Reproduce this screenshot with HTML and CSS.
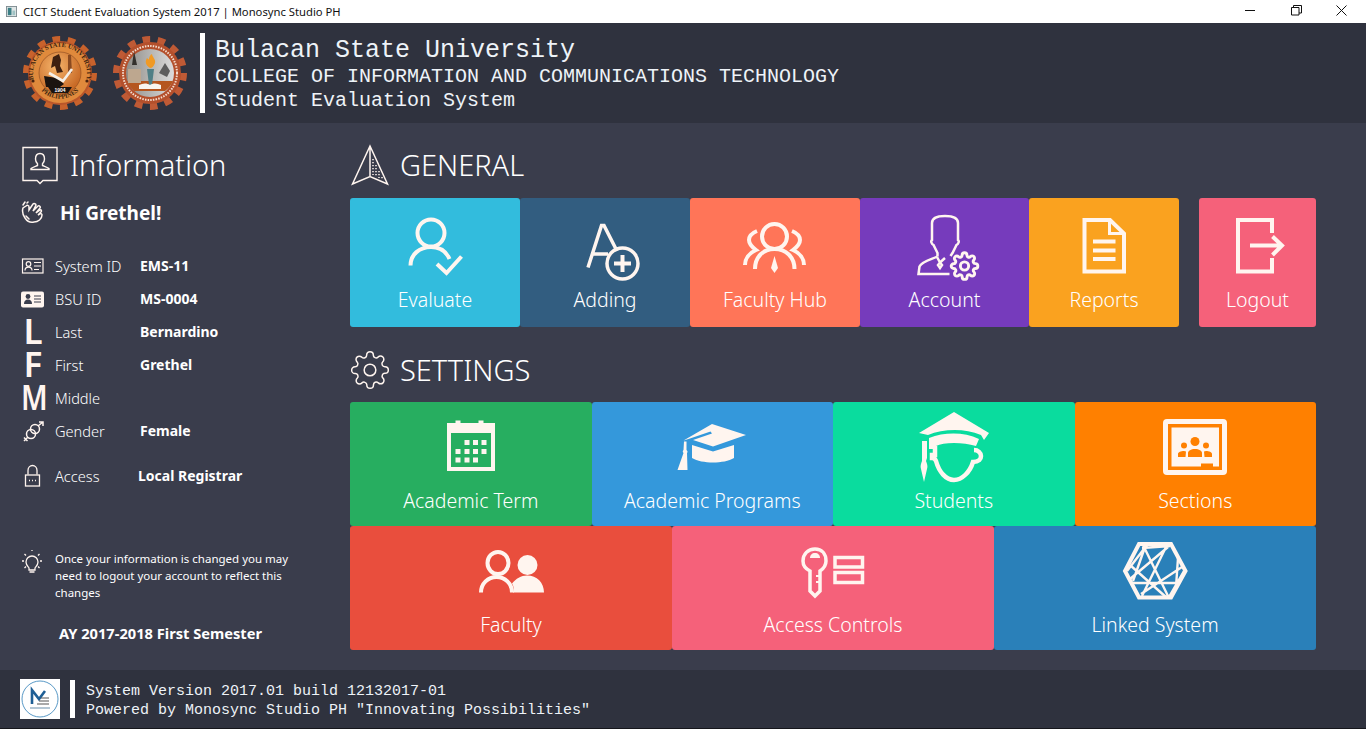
FILE: index.html
```html
<!DOCTYPE html>
<html lang="en">
<head>
    <meta charset="UTF-8">
    <title>CICT Student Evaluation System 2017 | Monosync Studio PH</title>
    <link rel="stylesheet" href="styles.css">
</head>
<body>
    <svg class="defs" width="0" height="0">
        <defs>
            <path id="gear" d="M19.4 15a1.65 1.65 0 0 0 .33 1.82l.06.06a2 2 0 0 1 0 2.83 2 2 0 0 1-2.83 0l-.06-.06a1.65 1.65 0 0 0-1.82-.33 1.65 1.65 0 0 0-1 1.51V21a2 2 0 0 1-2 2 2 2 0 0 1-2-2v-.09A1.65 1.65 0 0 0 9 19.4a1.65 1.65 0 0 0-1.82.33l-.06.06a2 2 0 0 1-2.83 0 2 2 0 0 1 0-2.83l.06-.06a1.65 1.65 0 0 0 .33-1.82 1.65 1.65 0 0 0-1.51-1H3a2 2 0 0 1-2-2 2 2 0 0 1 2-2h.09A1.65 1.65 0 0 0 4.6 9a1.65 1.65 0 0 0-.33-1.82l-.06-.06a2 2 0 0 1 0-2.83 2 2 0 0 1 2.83 0l.06.06a1.65 1.65 0 0 0 1.82.33H9a1.65 1.65 0 0 0 1-1.51V3a2 2 0 0 1 2-2 2 2 0 0 1 2 2v.09a1.65 1.65 0 0 0 1 1.51 1.65 1.65 0 0 0 1.82-.33l.06-.06a2 2 0 0 1 2.83 0 2 2 0 0 1 0 2.83l-.06.06a1.65 1.65 0 0 0-.33 1.82V9a1.65 1.65 0 0 0 1.51 1H21a2 2 0 0 1 2 2 2 2 0 0 1-2 2h-.09a1.65 1.65 0 0 0-1.51 1z"/>
            <radialGradient id="seal-a" cx="40%" cy="35%" r="70%">
                <stop offset="0" stop-color="#f6b56c"/>
                <stop offset="1" stop-color="#c4631f"/>
            </radialGradient>
            <linearGradient id="seal-b" x1="0" y1="0" x2="1" y2="0">
                <stop offset="0" stop-color="#8f8d88"/>
                <stop offset="1" stop-color="#dcdcdc"/>
            </linearGradient>
            <path id="seal-top" d="M12 46a27 27 0 1 1 52 0"/>
            <path id="seal-bottom" d="M17 53a26 26 0 0 0 42 0"/>
        </defs>
    </svg>

    <!-- window title bar -->
    <div class="titlebar">
        <svg class="app-icon" viewBox="0 0 12 12">
            <rect x="0.5" y="0.5" width="11" height="11" fill="#dfe6e6" stroke="#7d8b90"/>
            <rect x="2" y="2" width="4" height="8" fill="#3c7f86"/>
            <rect x="7" y="5" width="3" height="5" fill="#9fc2c4"/>
        </svg>
        <span class="title-text">CICT Student Evaluation System 2017 | Monosync Studio PH</span>
        <div class="window-buttons">
            <svg width="11" height="11" viewBox="0 0 11 11"><path d="M0 5.500h10" stroke="#111" fill="none"/></svg>
            <svg width="11" height="11" viewBox="0 0 11 11"><path d="M.5 2.500h7.500v7.500H.5zM2.500 2.500V.5h8v7.500H8" stroke="#111" fill="none"/></svg>
            <svg width="11" height="11" viewBox="0 0 11 11"><path d="M.5 .5l10 10M10.500 .5l-10 10" stroke="#111" fill="none"/></svg>
        </div>
    </div>

    <!-- university banner -->
    <header class="banner">
        <svg class="seal" viewBox="0 0 76 76">
            <circle cx="38" cy="38" r="33" fill="none" stroke="#c8622c" stroke-width="8" stroke-dasharray="7.4 7.4"/>
            <circle cx="38" cy="38" r="32" fill="#b9562a"/>
            <circle cx="38" cy="38" r="30" fill="#e08a3c"/>
            <circle cx="38" cy="38" r="21" fill="url(#seal-a)" stroke="#8a4a20" stroke-width="0.600"/>
            <text class="seal-text"><textPath href="#seal-top" startOffset="50%" text-anchor="middle">BULACAN STATE UNIVERSITY</textPath></text>
            <text class="seal-text"><textPath href="#seal-bottom" startOffset="50%" text-anchor="middle">PHILIPPINES</textPath></text>
            <circle cx="11" cy="46" r="1.600" fill="#4a2410"/>
            <circle cx="65" cy="46" r="1.600" fill="#4a2410"/>
            <path d="M31 22l6-3 2 6-1 6 3 6-6 1-2-7-4 2z" fill="#3e2010"/>
            <path d="M46 20h3l1 18h-4z" fill="#8a4a20"/>
            <path d="M22 41l13 2 7 6-4 3H24z" fill="#1b1410"/>
            <path d="M26 52h24l-4 6H30z" fill="#1b1410"/>
            <path d="M27 38l14 8 9-12" fill="none" stroke="#f5f0e8" stroke-width="2.600"/>
            <text class="seal-year" x="38" y="57" text-anchor="middle">1904</text>
        </svg>
        <svg class="seal seal-second" viewBox="0 0 76 76">
            <circle cx="38" cy="38" r="33" fill="none" stroke="#bf5a35" stroke-width="8" stroke-dasharray="7.4 7.4"/>
            <circle cx="38" cy="38" r="31" fill="#b4502c"/>
            <circle cx="38" cy="38" r="27" fill="none" stroke="#f4ddcf" stroke-width="2" stroke-dasharray="1.5 1.2"/>
            <circle cx="38" cy="38" r="24" fill="url(#seal-b)"/>
            <path d="M15 46h46a24 24 0 0 1-8 10H22a24 24 0 0 1-7-10z" fill="#b5561f"/>
            <path d="M16 34h13v14H16z" fill="#bda78f"/>
            <path d="M22 16l3 14h-5z" fill="#33302c"/>
            <path d="M35 34h7l-2 16h-3z" fill="#4f7f86"/>
            <path d="M38 33c-5-3-5-7-3-10 1 1 2 2 2 1 0-2 2-5 3-5 0 3 4 5 3 9-1 3-3 5-5 5z" fill="#f09a25"/>
            <path d="M27 50c4-2 8-2 11 0 3-2 7-2 11 0v4H27z" fill="#f8f6f0"/>
            <path d="M47 38l6-10 5 8-3 6z" fill="#5d5d5d"/>
        </svg>
        <div class="banner-bar"></div>
        <div class="banner-text">
            <div class="banner-uni">Bulacan State University</div>
            <div class="banner-line">COLLEGE OF INFORMATION AND COMMUNICATIONS TECHNOLOGY</div>
            <div class="banner-line">Student Evaluation System</div>
        </div>
    </header>

    <div class="main">
        <!-- left information column -->
        <aside class="sidebar">
            <div class="heading">
                <svg class="heading-icon" width="38" height="42" viewBox="21 145 38 42" fill="none" stroke="#fff5ef" stroke-width="1.400">
                    <path d="M23 148.500h34v33H43l-3 3-3-3H23z"/>
                    <path d="M40 154.500c-3.300 0-4.500 2.700-4.500 5.500 0 2 1 3.800 2 4.800v1.700c-2.500 1-5 1.800-6.500 3v1h18v-1c-1.500-1.200-4-2-6.500-3v-1.700c1-1 2-2.800 2-4.800 0-2.800-1.200-5.500-4.500-5.500z"/>
                </svg>
                <span class="heading-text">Information</span>
            </div>
            <div class="greeting">
                <svg width="24" height="24" viewBox="24 202 24 24" fill="none" stroke="#fff5ef" stroke-width="1.500" stroke-linecap="round">
                    <path d="M26 209c-1 3 0 7 2 10 2 3 5 5 9 4 4 0 8-3 8-7 0-1-1-2-2-1l-2 1 3-3c1-1 0-3-1-2l-4 3 4-5c1-1-1-3-2-2l-5 5 3-6c0-1-2-2-3-1l-4 6 0-3c0-2-2-2-3-1z"/>
                    <path d="M26 206l2-3M30 204l1-1"/>
                    <path d="M32 220l-3-3"/>
                </svg>
                <span>Hi Grethel!</span>
            </div>

            <div class="info-list">
                <div class="info-row">
                    <svg class="info-icon" viewBox="21 257 24 17" fill="none" stroke="#fff5ef" stroke-width="1.200">
                        <rect x="22.500" y="258.500" width="20.500" height="14"/>
                        <circle cx="28.500" cy="263.500" r="2.300"/>
                        <path d="M25 270c0-2 1.500-3.300 3.500-3.300s3.500 1.300 3.500 3.300M34 262h7M34 265.500h7M34 269h5"/>
                    </svg>
                    <span class="info-label">System ID</span>
                    <span class="info-value">EMS-11</span>
                </div>
                <div class="info-row">
                    <svg class="info-icon" viewBox="21 290 24 17">
                        <rect x="21" y="291" width="23" height="16" rx="2" fill="#fff5ef"/>
                        <circle cx="28" cy="296" r="2.400" fill="#3a3d4c"/>
                        <path d="M24 303.500c0-3 1.500-4.500 4-4.500s4 1.500 4 4.500z" fill="#3a3d4c"/>
                        <path d="M34 295.500h7M34 298.500h7M34 301.500h7" stroke="#3a3d4c" stroke-width="1.200"/>
                    </svg>
                    <span class="info-label">BSU ID</span>
                    <span class="info-value">MS-0004</span>
                </div>
                <div class="info-row">
                    <span class="info-letter">L</span>
                    <span class="info-label">Last</span>
                    <span class="info-value">Bernardino</span>
                </div>
                <div class="info-row">
                    <span class="info-letter">F</span>
                    <span class="info-label">First</span>
                    <span class="info-value">Grethel</span>
                </div>
                <div class="info-row">
                    <span class="info-letter info-letter-m">M</span>
                    <span class="info-label">Middle</span>
                    <span class="info-value"></span>
                </div>
                <div class="info-row">
                    <svg class="info-icon" viewBox="21 419 24 22" fill="none" stroke="#fff5ef" stroke-width="1.500">
                        <circle cx="31" cy="433" r="4.500"/>
                        <circle cx="35" cy="428" r="4.500"/>
                        <path d="M38 425l5-4M39 421h4v4M28 436l-4 4M24 436.500l3.500 3.500"/>
                    </svg>
                    <span class="info-label">Gender</span>
                    <span class="info-value">Female</span>
                </div>
                <div class="info-row info-row-access">
                    <svg class="info-icon" viewBox="21 464 24 23" fill="none" stroke="#fff5ef" stroke-width="1.300">
                        <rect x="25.500" y="474.500" width="14" height="11"/>
                        <path d="M28 474v-4c0-3 2-5 4.500-5s4.500 2 4.500 5v4M29 480h1M32 480h1M35 480h1"/>
                    </svg>
                    <span class="info-label">Access</span>
                    <span class="info-value">Local Registrar</span>
                </div>
            </div>

            <div class="note">
                <svg class="note-icon" width="24" height="24" viewBox="21 551 24 24" fill="none" stroke="#fff5ef" stroke-width="1.300">
                    <path d="M29 571v-2c-1-1.500-3-3-3-6a6 6 0 0 1 12 0c0 3-2 4.500-3 6v2z"/>
                    <path d="M29.500 573h5M22 562h2M40 562h2M24.500 555l1.500 1.500M39.500 555l-1.500 1.500M24.500 569l1.500-1.500M39.500 569l-1.500-1.500M32 551v1"/>
                </svg>
                <p>Once your information is changed you may need to logout your account to reflect this changes</p>
            </div>
            <div class="semester">AY 2017-2018 First Semester</div>
        </aside>

        <!-- tiles -->
        <main class="content">
            <div class="heading">
                <svg class="heading-icon" width="40" height="42" viewBox="350 145 40 42" fill="none" stroke="#fff5ef" stroke-width="1.500">
                    <path d="M370 147l17.500 38-17.500-7.500L352.500 185zM370 147v30.500"/>
                    <path d="M373 160v16M376 166v12M379 172v7M382 178v3" stroke-dasharray="1.200 1.800"/>
                </svg>
                <span class="heading-text">GENERAL</span>
            </div>
            <div class="tile-row">
                <a class="tile tile-w170 c-evaluate">
                    <svg class="tile-icon" viewBox="395 212 80 70" fill="none" stroke="#fff5ef" stroke-width="4">
                        <circle cx="431" cy="233" r="13.500"/>
                        <path d="M410.500 265.500c0-11 9-18.500 20.500-18.500 8.500 0 15 4 18.500 12"/>
                        <path d="M437 264l9.500 9 15-16.500"/>
                    </svg>
                    <span class="tile-label">Evaluate</span>
                </a>
                <a class="tile tile-w170 c-adding">
                    <svg class="tile-icon" viewBox="565 212 80 70" fill="none" stroke="#fff5ef" stroke-width="3.500">
                        <path d="M588 267.500L601.500 225.500h2.500L617 251M593 254h15"/>
                        <circle cx="622.500" cy="263.500" r="15.500"/>
                        <path d="M622.500 255v17M614 263.500h17" stroke-width="4"/>
                    </svg>
                    <span class="tile-label">Adding</span>
                </a>
                <a class="tile tile-w170 c-hub">
                    <svg class="tile-icon" viewBox="735 212 80 70" fill="none" stroke="#fff5ef" stroke-width="4">
                        <circle cx="774.500" cy="236.500" r="12.500"/>
                        <path d="M755 269c0-12 8-20 19.500-20s20 8 20 20"/>
                        <path d="M757 231c-5 2-8 5-8 9 0 4 3 7 7 10-7 3-11 9-11 15M792 231c5 2 8 5 8 9 0 4-3 7-7 10 7 3 11 9 11 15"/>
                        <path d="M774.500 256l3.500 12-3.500 5-3.500-5z" fill="#fff5ef" stroke="none"/>
                    </svg>
                    <span class="tile-label">Faculty Hub</span>
                </a>
                <a class="tile tile-w169 c-account">
                    <svg class="tile-icon" viewBox="905 212 80 70" fill="none" stroke="#fff5ef" stroke-width="2.500">
                        <path d="M937.500 256.500V253l-4-8c-2-1-3-4-1.500-5v-17c0-5 6-7 13-7s13 2 13 7v17c1.500 1 .5 4-1.500 5l-4 8-2 3"/>
                        <path d="M937.500 256.500c-6 3-15 4.500-18 10l-1 7.500h31"/>
                        <path d="M937 257l3 5.500 5-4.500M940 262.500l-2 2.500 2 3 2-3z"/>
                        <g transform="translate(950 251.500) scale(1.210)" stroke-width="2.400" stroke-linejoin="round"><use href="#gear"/><circle cx="12" cy="12" r="3.400"/></g>
                    </svg>
                    <span class="tile-label">Account</span>
                </a>
                <a class="tile tile-w150 c-reports">
                    <svg class="tile-icon" viewBox="1064 212 80 70" fill="none" stroke="#fff5ef" stroke-width="4">
                        <path d="M1084.500 220h25.500l14 13.500v38h-39.500z"/>
                        <path d="M1109.500 221v12.500h13" stroke-width="3"/>
                        <path d="M1093 241.500h22.500M1093 250.500h22.500M1093 259h22.500"/>
                    </svg>
                    <span class="tile-label">Reports</span>
                </a>
                <a class="tile tile-w117 tile-gap c-logout">
                    <svg class="tile-icon" viewBox="1217 212 80 70" fill="none" stroke="#fff5ef" stroke-width="4">
                        <path d="M1271 233v-13h-34v51.500h34V258"/>
                        <path d="M1249 245.500h32M1271.500 236.500l9.500 9-9.500 9.500"/>
                    </svg>
                    <span class="tile-label">Logout</span>
                </a>
            </div>

            <div class="heading heading-settings">
                <svg class="heading-icon" width="40" height="42" viewBox="0 0 24 24" fill="none" stroke="#fff5ef" stroke-width="0.900">
                    <use href="#gear"/>
                    <circle cx="12" cy="12" r="3.500"/>
                </svg>
                <span class="heading-text">SETTINGS</span>
            </div>
            <div class="tile-row">
                <a class="tile tile-grow tile-settings c-term">
                    <svg class="tile-icon" viewBox="431 415 80 70" fill="#fff5ef">
                        <path d="M447 423h8.500v-2.500h5v2.500h18v-2.500h5v2.500h11.500v48h-48zM451 433v34h40v-34z"/>
                        <rect x="464.500" y="440" width="5" height="5"/><rect x="473" y="440" width="5" height="5"/><rect x="481.500" y="440" width="5" height="5"/>
                        <rect x="455.500" y="449" width="5" height="5"/><rect x="464.500" y="449" width="5" height="5"/><rect x="473" y="449" width="5" height="5"/><rect x="481.500" y="449" width="5" height="5"/>
                        <rect x="455.500" y="457.500" width="5" height="5"/><rect x="464.500" y="457.500" width="5" height="5"/><rect x="473" y="457.500" width="5" height="5"/>
                    </svg>
                    <span class="tile-label">Academic Term</span>
                </a>
                <a class="tile tile-grow tile-settings c-programs">
                    <svg class="tile-icon" viewBox="673 415 80 70" fill="#fff5ef">
                        <path d="M713 424l34 11-33 11.500-20-6.500 19-6.500-1.500-2-22 7.500-5 1.500z"/>
                        <path d="M693 445l21 6.500 21-6.500v13c-5 3-13 4.500-21 4.500s-16-1.500-21-4.500z"/>
                        <path d="M685 441.500h2.500v8.500c1 1 1.500 2 .5 3l.5 17h-10l6-17c-1-1-1-2 0-3z"/>
                    </svg>
                    <span class="tile-label">Academic Programs</span>
                </a>
                <a class="tile tile-grow tile-settings c-students">
                    <svg class="tile-icon" viewBox="915 415 80 70" fill="#fff5ef">
                        <path d="M955 412l35 21-5 7-3-5c-17-7-38-6-53 0l-9-2z"/>
                        <path d="M930 438c16-6 35-6 50 1l-3 7c-7-2-14-3-22-3s-14 1-18 3l-1 3h-6z"/>
                        <path d="M936 446v9h-3v3c3 0 3 1 4 3 3 11 10 19 18 19s16-8 19-18c6 0 8-3 8-6s-3-6-7-6" fill="none" stroke="#fff5ef" stroke-width="4.500"/>
                        <path d="M923 441h5v17l-1 3c1 3 2 5 1 8l-3 13-3-13c-1-3 0-5 1-8z"/>
                    </svg>
                    <span class="tile-label">Students</span>
                </a>
                <a class="tile tile-grow tile-settings c-sections">
                    <svg class="tile-icon" viewBox="1156 415 80 70" fill="#fff5ef">
                        <rect x="1164" y="419" width="64" height="56" rx="4"/>
                        <rect x="1169" y="424" width="54" height="46" fill="#ff8000"/>
                        <rect x="1172.500" y="427.500" width="47.500" height="39"/>
                        <g fill="#ff8000">
                            <circle cx="1196" cy="441.500" r="4.500"/>
                            <circle cx="1185" cy="445.500" r="3"/>
                            <circle cx="1207" cy="445.500" r="3"/>
                            <path d="M1189 457v-4c0-2 3-4 7-4s7 2 7 4v4z"/>
                            <path d="M1179 457v-3c0-2 3-3 6-3l2 .5-.5 5.500zM1213 457v-3c0-2-3-3-6-3l-2 .5.500 5.500z"/>
                            <rect x="1202" y="463.500" width="12" height="3.500"/>
                        </g>
                    </svg>
                    <span class="tile-label">Sections</span>
                </a>
            </div>
            <div class="tile-row">
                <a class="tile tile-grow tile-settings c-faculty">
                    <svg class="tile-icon" viewBox="471 539 80 70" fill="none" stroke="#fff5ef" stroke-width="4">
                        <ellipse cx="498" cy="563" rx="10.500" ry="11"/>
                        <path d="M481 592.500c0-9 7-15.500 15.500-15.500s15.500 6.500 15.500 15.500"/>
                        <ellipse cx="527.500" cy="565" rx="10" ry="10" fill="#fff5ef" stroke="none"/>
                        <path d="M513 592.500c1-3 1-6-1-9 4-5 9-8 15-8 10 0 17 7 17 17z" fill="#fff5ef" stroke="none"/>
                    </svg>
                    <span class="tile-label">Faculty</span>
                </a>
                <a class="tile tile-grow tile-settings c-access">
                    <svg class="tile-icon" viewBox="793 539 80 70" fill="none" stroke="#fff5ef" stroke-width="3.500">
                        <path d="M810 577v-6c-4-2-7-6-7-10 0-7 5-12 12-12s11 5 11 12c0 4-3 8-6 10v20l-5 5-5-5z"/>
                        <path d="M810 558c0-3 2-5 5-5s5 2 5 5z" fill="#fff5ef" stroke="none"/>
                        <path d="M820 576h-4M820 582h-4" stroke-width="2"/>
                        <path d="M835 557.500h27.500v9.500H835zM835 572.500h27.500v10H835z"/>
                    </svg>
                    <span class="tile-label">Access Controls</span>
                </a>
                <a class="tile tile-grow tile-settings c-linked">
                    <svg class="tile-icon" viewBox="1115 539 80 70" fill="none" stroke="#fff5ef">
                        <path d="M1139 544h32l14.500 27-14.500 26.500h-32L1125 571z" stroke-width="4"/>
                        <path d="M1143 545l25 51M1167 545l-25 51M1127 571l20-26M1184 571l-15 26M1142 548l28-2M1168 547l-38 32M1130 565l37 33M1141 594l41-27M1133 583h47M1145 547l-12 34M1178 558l-2 29" stroke-width="2.400"/>
                    </svg>
                    <span class="tile-label">Linked System</span>
                </a>
            </div>
        </main>
    </div>

    <footer class="footer">
        <svg class="footer-logo" viewBox="0 0 40 40">
            <rect width="40" height="40" fill="#fff"/>
            <circle cx="20" cy="20" r="18" fill="none" stroke="#2f7fb8" stroke-width="0.800"/>
            <path d="M12 25V11l7 9 6-8" fill="none" stroke="#1f5f95" stroke-width="2.600"/>
            <path d="M21 19h8M19 22h10M17 25h12" stroke="#555" stroke-width="1.200"/>
            <path d="M10 29h20" stroke="#6a8fab" stroke-width="1"/>
        </svg>
        <div class="footer-bar"></div>
        <div class="footer-text">
            <div>System Version 2017.01 build 12132017-01</div>
            <div>Powered by Monosync Studio PH "Innovating Possibilities"</div>
        </div>
    </footer>
</body>
</html>
```

FILE: styles.css
```css
* {
    box-sizing: border-box;
}

body {
    margin: 0;
    width: 1366px;
    height: 729px;
    overflow: hidden;
    display: flex;
    flex-direction: column;
    font-family: "Noto Sans", sans-serif;
    color: #fff;
    background-color: #3a3d4c;
}

.defs {
    position: absolute;
}

/* title bar */
.titlebar {
    height: 23px;
    flex: none;
    display: flex;
    align-items: center;
    background-color: #fff;
    color: #111;
    font-size: 11.25px;
    padding-left: 6px;
}

.app-icon {
    width: 11px;
    height: 11px;
    margin-right: 6px;
}

.window-buttons {
    margin-left: auto;
    display: flex;
    gap: 34.5px;
    padding: 0 19px 3px 0;
}

/* banner */
.banner {
    height: 100px;
    flex: none;
    display: flex;
    align-items: center;
    padding-left: 22px;
    background-color: #2f323e;
}

.seal {
    width: 76px;
    height: 76px;
}

.seal-second {
    margin-left: 14px;
}

.seal-text {
    font-family: "Liberation Serif", serif;
    font-size: 6.5px;
    font-weight: bold;
    fill: #3b1f0e;
}

.seal-year {
    font-family: "Liberation Sans", sans-serif;
    font-size: 5px;
    font-weight: bold;
    fill: #fff;
}

.banner-bar {
    width: 5px;
    height: 80px;
    margin-left: 12px;
    background-color: #fff;
}

.banner-text {
    margin-left: 10px;
    padding-top: 4px;
    font-family: "Liberation Mono", monospace;
    color: #eef3f8;
}

.banner-uni {
    font-size: 25px;
    line-height: 28px;
}

.banner-line {
    font-size: 20px;
    line-height: 24px;
}

/* main area */
.main {
    flex: 1;
    display: flex;
    min-height: 0;
}

.sidebar {
    width: 350px;
    flex: none;
    padding: 20px 0 0 21px;
}

.content {
    flex: 1;
    padding: 20px 50px 0 0;
}

.heading {
    height: 44px;
    display: flex;
    align-items: center;
}

.heading-text {
    font-size: 29px;
    font-weight: 300;
    margin-left: 10px;
    margin-top: -1px;
}

.sidebar .heading-text {
    margin-left: 11px;
}

.content .heading {
    margin-bottom: 11px;
}

.content .heading-settings {
    margin-top: 21px;
    margin-bottom: 10px;
}

.greeting {
    height: 26px;
    margin-top: 13px;
    display: flex;
    align-items: center;
    gap: 15px;
    font-size: 19px;
    font-weight: 700;
}

.info-list {
    margin-top: 23px;
}

.info-row {
    height: 33px;
    display: flex;
    align-items: center;
    font-size: 14px;
}

.info-row-access {
    margin-top: 12px;
}

.info-row-access .info-label {
    width: 83px;
}

.info-icon {
    width: 24px;
    height: 24px;
    margin-right: 10px;
    flex: none;
}

.info-letter {
    width: 24px;
    margin: -2px 10px 0 0;
    font-size: 35px;
    font-weight: 600;
    line-height: 33px;
    text-align: center;
    color: #fff5ef;
    flex: none;
}

.info-letter-m {
    text-align: left;
    transform: scaleX(0.82);
    transform-origin: left center;
}

.info-label {
    width: 85px;
    font-size: 14.6px;
    font-weight: 300;
}

.info-value {
    font-weight: 700;
}

.note {
    display: flex;
    margin-top: 58px;
}

.note-icon {
    flex: none;
    margin-right: 10px;
}

.note p {
    margin: 0;
    width: 240px;
    font-size: 11.5px;
    line-height: 17px;
}

.semester {
    margin: 20px 0 0 38px;
    font-size: 14.65px;
    font-weight: 700;
    line-height: 24px;
}

/* tiles */
.tile-row {
    display: flex;
}

.tile {
    height: 129px;
    display: flex;
    flex-direction: column;
    align-items: center;
    padding-top: 14px;
    border-radius: 3px;
}

.tile-settings {
    height: 124px;
    padding-top: 13px;
}

.tile-grow {
    flex: 1;
}

.tile-w170 {
    width: 170px;
}

.tile-w169 {
    width: 169px;
}

.tile-w150 {
    width: 150px;
}

.tile-w117 {
    width: 117px;
}

.tile-gap {
    margin-left: 20px;
}

.tile-icon {
    width: 80px;
    height: 70px;
    flex: none;
    overflow: visible;
}

.tile-label {
    font-size: 19.5px;
    font-weight: 300;
    line-height: 26px;
    margin-top: 5px;
}

.tile-settings .tile-label {
    margin-top: 3px;
}

.c-evaluate { background-color: #32bcdd; }
.c-adding { background-color: #325d80; }
.c-hub { background-color: #ff7558; }
.c-account { background-color: #763bbc; }
.c-reports { background-color: #faa21f; }
.c-logout { background-color: #f5617a; }
.c-term { background-color: #27ae60; }
.c-programs { background-color: #3498db; }
.c-students { background-color: #0adc9e; }
.c-sections { background-color: #ff8000; }
.c-faculty { background-color: #e94e3d; }
.c-access { background-color: #f5617a; }
.c-linked { background-color: #2a80b9; }

/* footer */
.footer {
    height: 59px;
    flex: none;
    display: flex;
    align-items: center;
    padding: 0 0 1px 20px;
    background-color: #2f323e;
    border-bottom: 1px solid #15161b;
}

.footer-logo {
    width: 40px;
    height: 40px;
}

.footer-bar {
    width: 5px;
    height: 38px;
    margin-left: 10px;
    background-color: #fff;
}

.footer-text {
    margin-left: 11px;
    padding-top: 4px;
    font-family: "Liberation Mono", monospace;
    font-size: 15px;
    line-height: 19px;
    color: #eef3f8;
}
```
